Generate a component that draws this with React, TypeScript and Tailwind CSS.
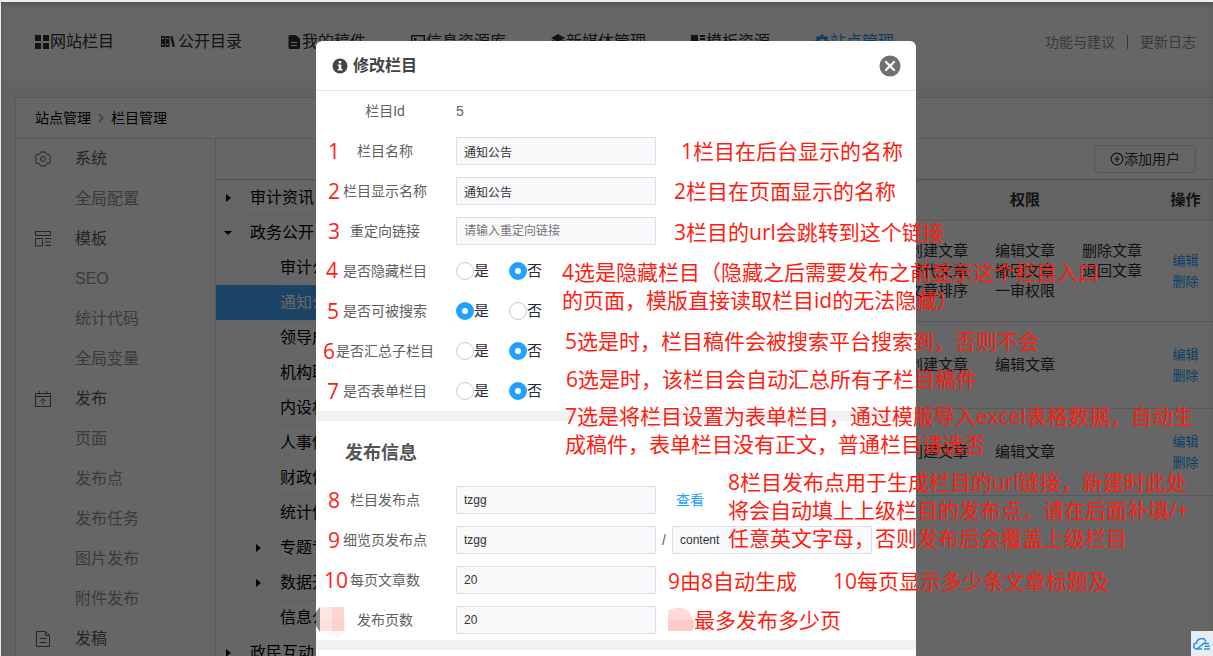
import { ChevronRight, CirclePlus } from 'lucide-react';
import type { ReactNode } from 'react';

const navItems: { label: string; icon: ReactNode; width: string; active?: boolean }[] = [
  {
    label: '网站栏目',
    width: 'w-4',
    icon: <path d="M1 1h6v6H1zM9 1h6v6H9zM1 9h6v6H1zM9 9h6v6H9z" />,
  },
  {
    label: '公开目录',
    width: 'w-5',
    icon: <path fillRule="evenodd" d="M1 2h4v11H1zM5.5 2h4v11h-4zM10.2 2.6l2.3-.6L15 12.5l-2.4.6zM2 4v1h2V4zM2 10v1h2v-1zM6.5 4v1h2V4zM6.5 10v1h2v-1z" />,
  },
  {
    label: '我的稿件',
    width: 'w-4',
    icon: <path fillRule="evenodd" d="M4 1h6l4 4v8.500a1.500 1.500 0 0 1-1.500 1.500h-8.500a1.500 1.500 0 0 1-1.500-1.500v-11A1.500 1.500 0 0 1 4 1zM5 8v1h6V8zM5 11v1h6v-1z" />,
  },
  {
    label: '信息资源库',
    width: 'w-4',
    icon: <path fillRule="evenodd" d="M1 1h14v13H1zM2.500 2.500v10h11v-10zM4 4h2.500v2.500H4zM3.500 11l3-3 1.500 1.500 3-4 2 5.500z" />,
  },
  {
    label: '新媒体管理',
    width: 'w-4',
    icon: <path d="M8 0l7 4-7 4-7-4zM1 7l2-1 5 3 5-3 2 1-7 4zM1 10l2-1 5 3 5-3 2 1-7 4z" />,
  },
  {
    label: '模板资源',
    width: 'w-4',
    icon: <path d="M1 1h7v8H1zM10 1h5v2h-5zM10 4h5v2h-5zM10 7h5v2h-5zM1 11h14v3H1z" />,
  },
  {
    label: '站点管理',
    width: 'w-4',
    active: true,
    icon: (
      <>
        <circle cx="8" cy="8" r="4.500" fill="none" stroke="currentColor" strokeWidth="3" />
        <path
          d="M8 .5v3M8 12.500v3M.5 8h3M12.500 8h3M2.700 2.700l2 2M11.300 11.300l2 2M2.700 13.300l2-2M11.300 4.700l2-2"
          stroke="currentColor"
          strokeWidth="3"
        />
      </>
    ),
  },
];

const gearIcon = (
  <>
    <path
      strokeLinejoin="round"
      d="M5.500 1h5l.8 2 1.200.8 2-.3 1 3.200-1 1.300 1 1.300-1 3.200-2-.3-1.200.8-.8 2h-5l-.8-2-1.200-.8-2 .3-1-3.200 1-1.300-1-1.300 1-3.200 2 .3L4.700 3z"
    />
    <circle cx="8" cy="8" r="2.500" />
  </>
);
const templateIcon = <path d="M.5.5h15v4H.5zM.5 7.500h7v7.500h-7zM10 7.500h6M10 11h6M10 14.500h6" />;
const publishIcon = <path d="M.5 2.500h15v13H.5zM.5 5.500h15M4.500 0v3.500M11.500 0v3.500M8 13.500V8M5 10.500l3-3 3 3" />;
const draftIcon = <path d="M1.500.5h9l4 4v11h-13zM10.500.5v4h4M4.500 7.500h7M4.500 11.500h7" />;

const menu: { label: string; icon?: ReactNode }[] = [
  { label: '系统', icon: gearIcon },
  { label: '全局配置' },
  { label: '模板', icon: templateIcon },
  { label: 'SEO' },
  { label: '统计代码' },
  { label: '全局变量' },
  { label: '发布', icon: publishIcon },
  { label: '页面' },
  { label: '发布点' },
  { label: '发布任务' },
  { label: '图片发布' },
  { label: '附件发布' },
  { label: '发稿', icon: draftIcon },
];

const tree: { label: string; child?: boolean; arrow?: 'right' | 'down'; selected?: boolean }[] = [
  { label: '审计资讯', arrow: 'right' },
  { label: '政务公开', arrow: 'down' },
  { label: '审计公开', child: true },
  { label: '通知公告', child: true, selected: true },
  { label: '领导成员', child: true },
  { label: '机构职能', child: true },
  { label: '内设机构', child: true },
  { label: '人事信息', child: true },
  { label: '财政信息', child: true },
  { label: '统计信息', child: true },
  { label: '专题专栏', child: true, arrow: 'right' },
  { label: '数据开放', child: true, arrow: 'right' },
  { label: '信息公开', child: true },
  { label: '政民互动', arrow: 'right' },
];

const permissionRows = [
  {
    height: 'h-[101px]',
    items: ['创建文章', '编辑文章', '删除文章', '替代文章', '撤回文章', '退回文章', '文章排序', '一审权限'],
  },
  { height: 'h-[87px]', items: ['创建文章', '编辑文章'] },
  { height: 'h-[87px]', items: ['创建文章', '编辑文章'] },
];

// handwritten notes, placed relative to the dialog
const notes = [
  { place: 'left-[12px] top-[96px]', lines: ['1'] },
  { place: 'left-[12px] top-[136px]', lines: ['2'] },
  { place: 'left-[12px] top-[176px]', lines: ['3'] },
  { place: 'left-[10px] top-[215px]', lines: ['4'] },
  { place: 'left-[11px] top-[256px]', lines: ['5'] },
  { place: 'left-[7px] top-[296px]', lines: ['6'] },
  { place: 'left-[11px] top-[336px]', lines: ['7'] },
  { place: 'left-[12px] top-[445px]', lines: ['8'] },
  { place: 'left-[12px] top-[485px]', lines: ['9'] },
  { place: 'left-[8px] top-[525px]', lines: ['10'] },
  { place: 'left-[365px] top-[96px]', lines: ['1栏目在后台显示的名称'] },
  { place: 'left-[358px] top-[136px]', lines: ['2栏目在页面显示的名称'] },
  { place: 'left-[358px] top-[177px]', lines: ['3栏目的url会跳转到这个链接'] },
  {
    place: 'left-[246px] top-[217px]',
    lines: ['4选是隐藏栏目（隐藏之后需要发布之前显示这个栏目入口', '的页面，模版直接读取栏目id的无法隐藏）'],
  },
  { place: 'left-[249px] top-[286px]', lines: ['5选是时，栏目稿件会被搜索平台搜索到，否则不会'] },
  { place: 'left-[250px] top-[324px]', lines: ['6选是时，该栏目会自动汇总所有子栏目稿件'] },
  {
    place: 'left-[249px] top-[361px]',
    lines: ['7选是将栏目设置为表单栏目，通过模版导入excel表格数据，自动生', '成稿件，表单栏目没有正文，普通栏目请选否'],
  },
  {
    place: 'left-[412px] top-[427px]',
    lines: ['8栏目发布点用于生成栏目的url链接，新建时此处', '将会自动填上上级栏目的发布点，请在后面补填/+', '任意英文字母，否则发布后会覆盖上级栏目'],
  },
  { place: 'left-[352px] top-[526px]', lines: ['9由8自动生成'] },
  { place: 'left-[517px] top-[526px]', lines: ['10每页显示多少条文章标题及'] },
  { place: 'left-[378px] top-[565px]', lines: ['最多发布多少页'] },
];

const inputClass =
  'h-7 w-[200px] border border-[#dcdfe6] bg-[#f8f9fb] px-[7px] text-xs text-[#333] placeholder:text-[#757575] outline-none';

const TextRow = ({ id, label, value, placeholder, children }: {
  id: string;
  label: string;
  value?: string;
  placeholder?: string;
  children?: ReactNode;
}) => (
  <div className="flex h-10 items-center pl-3.5">
    <label htmlFor={id} className="mr-4 w-[110px] whitespace-nowrap text-center">{label}</label>
    <input id={id} type="text" defaultValue={value} placeholder={placeholder} className={inputClass} />
    {children}
  </div>
);

const RadioRow = ({ name, label, value }: { name: string; label: string; value: '是' | '否' }) => (
  <div role="radiogroup" aria-label={label} className="flex h-10 items-center pl-3.5">
    <span className="mr-4 w-[110px] whitespace-nowrap text-center">{label}</span>
    {['是', '否'].map((option) => (
      <label key={option} className="mr-5 flex items-center text-[15px] text-[#1f2d3d]">
        <input
          type="radio"
          name={name}
          defaultChecked={option === value}
          className="size-[18px] appearance-none rounded-full border border-[#c0ccda] bg-white checked:border-[6px] checked:border-[#20a0ff]"
        />
        {option}
      </label>
    ))}
  </div>
);

const Header = () => (
  <header className="flex h-[79px] items-center justify-between bg-white pl-[33px] pr-[17px]">
    <nav className="flex gap-11 text-base text-[#303133]">
      {navItems.map((item) => (
        <a
          key={item.label}
          href="#"
          className={`flex items-center whitespace-nowrap ${item.active ? 'text-[#1e9fff]' : ''}`}
        >
          <span className={`flex justify-center ${item.width}`}>
            <svg viewBox="0 0 16 16" className="size-4 fill-current">{item.icon}</svg>
          </span>
          {item.label}
        </a>
      ))}
    </nav>
    <div className="flex items-center gap-3 whitespace-nowrap text-sm text-[#909090]">
      <a href="#">功能与建议</a>
      <span className="h-3.5 w-px bg-[#888]" />
      <a href="#">更新日志</a>
    </div>
  </header>
);

const Sidebar = () => (
  <aside className="w-[200px] shrink-0 border-r border-[#dcdfe6]">
    <ul>
      {menu.map((item) => (
        <li key={item.label}>
          <a
            href="#"
            className={`flex h-10 items-center pl-[19px] text-base ${item.icon ? 'text-[#606060]' : 'text-[#959595]'}`}
          >
            <span className="w-10">
              {item.icon && (
                <svg viewBox="0 0 16 16" className="size-4 fill-none stroke-current">{item.icon}</svg>
              )}
            </span>
            {item.label}
          </a>
        </li>
      ))}
    </ul>
  </aside>
);

const Tree = () => (
  <ul className="w-[200px] shrink-0 text-base text-black">
    {tree.map((node) => (
      <li
        key={node.label}
        className={`flex h-[35px] ${node.child ? 'pl-[30px]' : ''} ${node.selected ? 'bg-[#43a7fd] text-white' : ''}`}
      >
        <span className="flex w-[30px] shrink-0 items-center pl-2">
          {node.arrow && (
            <svg viewBox="0 0 8 8" className="size-2 fill-current">
              <path d={node.arrow === 'right' ? 'M2 0l5 4-5 4z' : 'M0 2h8L4 6z'} />
            </svg>
          )}
        </span>
        <span
          className={`flex flex-1 items-center border-t pl-1 ${node.selected ? 'border-[#5db3fd]' : 'border-[#efefef]'}`}
        >
          {node.label}
        </span>
      </li>
    ))}
  </ul>
);

const PermissionTable = () => (
  <table className="w-full table-fixed self-start border-collapse text-[15px] text-[#303133]">
    <colgroup>
      <col />
      <col className="w-[266px]" />
      <col className="w-[55px]" />
    </colgroup>
    <thead>
      <tr className="h-10 border-b border-[#dcdfe6] bg-[#f7f7f7]">
        <th />
        <th className="font-bold">权限</th>
        <th className="font-bold">操作</th>
      </tr>
    </thead>
    <tbody>
      {permissionRows.map((row, index) => (
        <tr key={index} className={`border-b border-[#dcdfe6] ${row.height}`}>
          <td />
          <td className="pl-4">
            <div className="grid grid-cols-[87px_87px_1fr] leading-5">
              {row.items.map((item) => (
                <span key={item}>{item}</span>
              ))}
            </div>
          </td>
          <td className="text-center text-[13px] leading-[21px] text-[#1e9fff]">
            <a href="#" className="block">编辑</a>
            <a href="#" className="block">删除</a>
          </td>
        </tr>
      ))}
    </tbody>
  </table>
);

const Notes = () => (
  <div className="pointer-events-none font-['Open_Sans','Noto_Sans_CJK_SC',sans-serif] text-[21px] leading-7 text-[#ff1d10]">
    {notes.map((note) => (
      <p key={note.place} className={`absolute whitespace-nowrap ${note.place}`}>
        {note.lines.map((line) => (
          <span key={line} className="block">{line}</span>
        ))}
      </p>
    ))}
    <svg viewBox="0 0 32 32" className="absolute left-0 top-[564px] size-8">
      <path d="M0 7l4-5v25L0 21z" fill="#8c8c8c" />
      <circle cx="19" cy="20" r="12" fill="#faf7f7" />
      <path d="M4 2h12v12H4z" fill="#ffe5e3" />
      <path d="M16 2h11l1 1v11H16z" fill="#ffd5d2" />
      <path d="M4 14h12v12H4z" fill="#ffdfdd" />
      <path d="M16 14h12v12H16z" fill="#ffcfcc" />
    </svg>
    <svg viewBox="0 0 28 28" className="absolute left-[352px] top-[567px] size-7">
      <path d="M0 12V3q4-3 9-3h5q9 2 11 12z" fill="#ffdad8" />
      <path d="M0 12h26v6q0 5-4 5H1l-1-1z" fill="#ffcac7" />
    </svg>
  </div>
);

const Dialog = () => (
  <div className="relative w-[600px] shrink-0">
    <section
      role="dialog"
      aria-labelledby="dialog-title"
      className="min-h-screen rounded-t-md bg-white text-sm text-[#606060]"
    >
      <div className="flex h-[50px] items-center border-b border-[#e6e6e6] pl-4 pr-[15px]">
        <svg viewBox="0 0 16 16" className="size-4">
          <circle cx="8" cy="8" r="7.500" fill="#444" />
          <path d="M6.800 3h2.500v2.200H6.800zM5.800 6.500h3.500v4.500h1.200v1.500H5.600V11h1.200V8h-1z" fill="#fff" />
        </svg>
        <h2 id="dialog-title" className="ml-[5px] text-base font-bold text-[#444]">修改栏目</h2>
        <button type="button" aria-label="关闭" className="ml-auto">
          <svg viewBox="0 0 22 22" className="size-[22px]">
            <circle cx="11" cy="11" r="10.500" fill="#707070" />
            <path d="M7 7l8 8M15 7l-8 8" stroke="#fff" strokeWidth="2.400" strokeLinecap="round" />
          </svg>
        </button>
      </div>
      <form>
        <div className="flex h-10 items-center pl-3.5">
          <span className="mr-4 w-[110px] text-center">栏目Id</span>
          <span>5</span>
        </div>
        <TextRow id="name" label="栏目名称" value="通知公告" />
        <TextRow id="display-name" label="栏目显示名称" value="通知公告" />
        <TextRow id="redirect" label="重定向链接" placeholder="请输入重定向链接" />
        <RadioRow name="hidden" label="是否隐藏栏目" value="否" />
        <RadioRow name="searchable" label="是否可被搜索" value="是" />
        <RadioRow name="collect" label="是否汇总子栏目" value="否" />
        <RadioRow name="form" label="是否表单栏目" value="否" />

        <div className="h-2.5 bg-[#f1f1f1]" />
        <h3 className="flex h-[59px] items-center pl-[29px] pt-1 text-lg font-bold text-[#555]">发布信息</h3>

        <TextRow id="publish-point" label="栏目发布点" value="tzgg">
          <a href="#" className="ml-5 text-[#20a0ff]">查看</a>
        </TextRow>
        <TextRow id="detail-point" label="细览页发布点" value="tzgg">
          <span className="w-4 text-center">/</span>
          <input type="text" aria-label="细览页目录" defaultValue="content" className={inputClass} />
        </TextRow>
        <TextRow id="page-size" label="每页文章数" value="20" />
        <TextRow id="page-count" label="发布页数" value="20" />
        <div className="h-2.5 bg-[#f1f1f1]" />
      </form>
    </section>
    <Notes />
  </div>
);

const App = () => {
  return (
    <div className="relative h-screen overflow-hidden border-l border-t-2 border-l-[#e6eff9] border-t-[#e6eff9] bg-[#f5f5f5] font-['Liberation_Sans','Noto_Sans_CJK_SC',sans-serif]">
      <Header />
      <main className="ml-3.5 mt-4 border-l border-t border-[#dcdfe6] bg-white">
        <div className="flex h-[41px] items-center gap-[3px] border-b border-[#dcdfe6] pl-[19px] text-sm text-black">
          <a href="#">站点管理</a>
          <ChevronRight size={14} strokeWidth={3} className="text-[#999]" />
          <a href="#">栏目管理</a>
        </div>
        <div className="flex">
          <Sidebar />
          <div className="min-w-0 flex-1">
            <div className="flex h-[41px] items-center justify-end border-b border-[#ccc] pr-[17px]">
              <button
                type="button"
                className="flex h-7 w-[102px] items-center justify-center rounded border border-[#d3dce0] bg-[#fafcfc] text-sm text-[#303133]"
              >
                <CirclePlus size={14} />
                添加用户
              </button>
            </div>
            <div className="flex">
              <Tree />
              <PermissionTable />
            </div>
          </div>
        </div>
      </main>

      <div className="absolute inset-0 flex justify-center overflow-hidden bg-black/60 pl-[18px] pt-[39px] shadow-[inset_0_4px_4px_rgba(0,0,0,0.15)]">
        <Dialog />
      </div>

      <button type="button" aria-label="云服务" className="absolute bottom-0 right-0 flex h-[25px] w-[22px] items-center justify-center bg-[#e9ecf0]">
        <svg viewBox="0 0 18 16" className="h-4 w-[18px] fill-none stroke-[#2196f3]" strokeWidth="1.500">
          <path d="M9 13H4a3 3 0 0 1-.5-6A5 5 0 0 1 13 5.500M4 13l6-5 3-1.500M10 7.500h6M12 10.300h5M11 13h6" />
        </svg>
      </button>
    </div>
  );
};

export default App;
